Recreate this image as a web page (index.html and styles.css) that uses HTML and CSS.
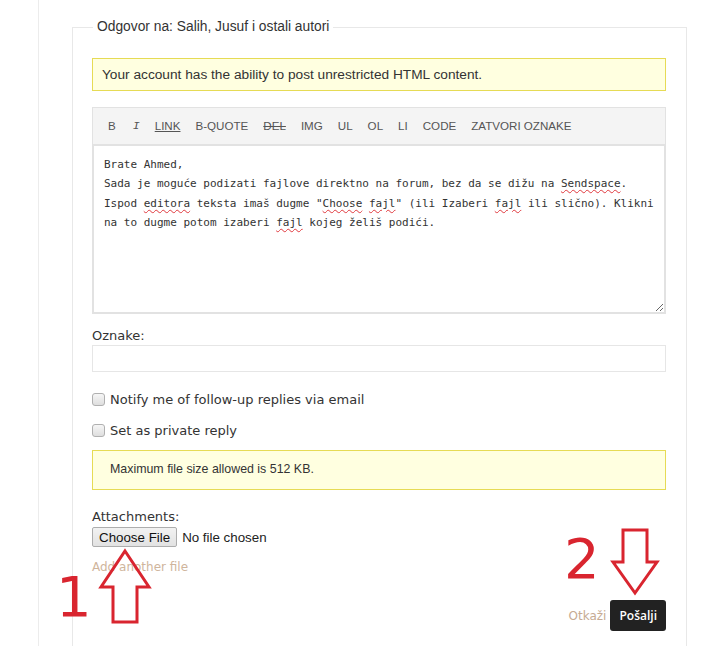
FILE: index.html
```html
<!DOCTYPE html>
<html lang="bs">
<head>
<meta charset="utf-8">
<title>Odgovor</title>
<link rel="stylesheet" href="styles.css">
</head>
<body>
<div class="page">
  <div class="column">
    <fieldset class="reply">
      <legend class="reply-legend">Odgovor na: Salih, Jusuf i ostali autori</legend>

      <div class="notice notice-html">Your account has the ability to post unrestricted HTML content.</div>

      <div class="editor">
        <div class="toolbar">
          <button class="tb tb-b" type="button">B</button>
          <button class="tb tb-i" type="button">I</button>
          <button class="tb tb-link" type="button">LINK</button>
          <button class="tb" type="button">B-QUOTE</button>
          <button class="tb tb-del" type="button">DEL</button>
          <button class="tb" type="button">IMG</button>
          <button class="tb" type="button">UL</button>
          <button class="tb" type="button">OL</button>
          <button class="tb" type="button">LI</button>
          <button class="tb" type="button">CODE</button>
          <button class="tb" type="button">ZATVORI OZNAKE</button>
        </div>
        <div class="textbox" role="textbox" aria-multiline="true">Brate Ahmed,<br>Sada je moguće podizati fajlove direktno na forum, bez da se dižu na <span class="typo">Sendspace</span>.<br>Ispod <span class="typo">editora</span> teksta imaš dugme "<span class="typo">Choose</span> <span class="typo">fajl</span>" (ili Izaberi <span class="typo">fajl</span> ili slično). Klikni<br>na to dugme potom izaberi <span class="typo">fajl</span> kojeg želiš podići.</div>
      </div>

      <label class="field-label" for="tags">Oznake:</label>
      <input class="tags" id="tags" type="text">

      <label class="check check-first"><input class="box" type="checkbox"><span>Notify me of follow-up replies via email</span></label>
      <label class="check"><input class="box" type="checkbox"><span>Set as private reply</span></label>

      <div class="notice notice-size">Maximum file size allowed is 512 KB.</div>

      <div class="attachments">
        <div class="att-label">Attachments:</div>
        <input class="file" type="file">
        <a class="add-file" href="#">Add another file</a>
      </div>

      <div class="actions">
        <a class="cancel" href="#">Otkaži</a>
        <button class="submit" type="button">Pošalji</button>
      </div>
    </fieldset>
  </div>

  <span class="mark mark-1">1</span>
  <span class="mark mark-2">2</span>
  <svg class="arrow arrow-up" width="56" height="80" viewBox="0 0 56 80" aria-hidden="true">
    <polygon points="27,3 51,39 39,39 39,74 15,74 15,39 3,39" />
  </svg>
  <svg class="arrow arrow-down" width="52" height="72" viewBox="0 0 52 72" aria-hidden="true">
    <polygon points="13,3 37,3 37,35 47,35 25,66 3,35 13,35" />
  </svg>
</div>
</body>
</html>
```
FILE: styles.css
```css
* { box-sizing: border-box; }

html, body {
  margin: 0;
  padding: 0;
  background: #fff;
}

.page {
  position: relative;
  width: 708px;
  min-height: 646px;
  overflow: hidden;
}

.column {
  margin-left: 38px;
  border-left: 1px solid #ececec;
  padding: 19px 0 0 33px;
  min-height: 646px;
}

.reply {
  width: 615px;
  margin: 0;
  border: 1px solid #e8e8e8;
  border-bottom: none;
  padding: 23px 20px 40px 19px;
  min-inline-size: 0;
  font-family: "DejaVu Sans", Verdana, sans-serif;
  font-size: 13px;
  color: #333;
}

.reply-legend {
  margin-left: 1px;
  padding: 0 4px;
  font-family: "Liberation Sans", Arial, sans-serif;
  font-size: 13.8px;
  line-height: 16px;
  color: #333;
}

.notice {
  background: #ffffe0;
  border: 1px solid #e6db55;
  font-family: "Liberation Sans", Arial, sans-serif;
  color: #333;
}

.notice-html {
  padding: 8px 9px;
  font-size: 13.7px;
  line-height: 15px;
}

.editor {
  margin-top: 16px;
}

.toolbar {
  display: flex;
  align-items: center;
  background: #f4f4f4;
  border: 1px solid #e2e2e2;
  border-bottom: none;
  padding: 11px 8px 11px 8px;
}

.tb {
  border: none;
  background: none;
  margin: 0 1px 0 0;
  padding: 0 7px;
  font-family: "Liberation Sans", Arial, sans-serif;
  font-size: 11.6px;
  line-height: 14px;
  color: #555;
  cursor: pointer;
}

.tb-i {
  font-family: "Liberation Mono", monospace;
  font-style: italic;
  padding: 0 7px 0 9px;
}

.tb-link { text-decoration: underline; }
.tb-del { text-decoration: line-through; }

.textbox {
  height: 170px;
  border: 2px solid #e2e2e2;
  padding: 9px 10px 6px;
  font-family: "DejaVu Sans Mono", monospace;
  font-size: 11px;
  line-height: 19.3px;
  color: #333;
  background: #fff;
  resize: vertical;
  overflow: auto;
  white-space: nowrap;
}

.typo {
  text-decoration: underline wavy #e0393e;
  text-decoration-thickness: 1px;
  text-underline-offset: 2px;
}

.field-label {
  display: block;
  margin-top: 14px;
  line-height: 16px;
}

.tags {
  display: block;
  width: 100%;
  height: 27px;
  margin-top: 1px;
  border: 1px solid #e6e6e6;
  background: #fff;
}

.check {
  display: flex;
  align-items: center;
  height: 20px;
  line-height: 16px;
  margin-top: 11px;
}

.check-first { margin-top: 18px; }

.box {
  appearance: none;
  width: 13px;
  height: 13px;
  margin: -2px 5px 0 0;
  border: 1px solid #b0b0b0;
  border-radius: 3px;
  background: linear-gradient(#f6f6f6, #dedede);
  flex: none;
}

.notice-size {
  margin-top: 9px;
  padding: 11px 17px 12px;
  font-size: 12.4px;
  line-height: 15px;
}

.attachments {
  margin-top: 19px;
}

.att-label {
  line-height: 16px;
}

.file {
  display: block;
  margin-top: 2px;
  font-family: "Liberation Sans", Arial, sans-serif;
  font-size: 13.33px;
  color: #222;
  height: 20px;
}

.file::file-selector-button {
  height: 20px;
  margin: 0 5px 0 0;
  padding: 0 6px;
  border: 1px solid #adadad;
  border-radius: 2px;
  background: linear-gradient(#f2f2f2, #e2e2e2);
  font-family: "Liberation Sans", Arial, sans-serif;
  font-size: 13.33px;
  color: #111;
}

.add-file {
  display: inline-block;
  margin-top: 12px;
  font-size: 12px;
  line-height: 16px;
  color: #cfb59c;
  text-decoration: none;
}

.actions {
  display: flex;
  justify-content: flex-end;
  align-items: center;
  margin-top: 25px;
}

.cancel {
  margin-right: 4px;
  font-size: 12px;
  color: #c6ab93;
  text-decoration: none;
}

.submit {
  height: 31px;
  padding: 0 9px;
  border: none;
  border-radius: 3px;
  background: #222;
  color: #fff;
  font-family: "Open Sans", sans-serif;
  font-weight: 600;
  font-size: 12px;
}

.mark {
  position: absolute;
  font-family: "DejaVu Sans", sans-serif;
  font-size: 56px;
  line-height: 1;
  color: #d9252f;
}

.mark-1 { left: 56px; top: 569px; }
.mark-2 { left: 564px; top: 531px; }

.arrow {
  position: absolute;
  fill: none;
  stroke: #d9252f;
  stroke-width: 3;
  stroke-linejoin: miter;
}

.arrow-up { left: 98px; top: 548px; }
.arrow-down { left: 610px; top: 527px; }
```
